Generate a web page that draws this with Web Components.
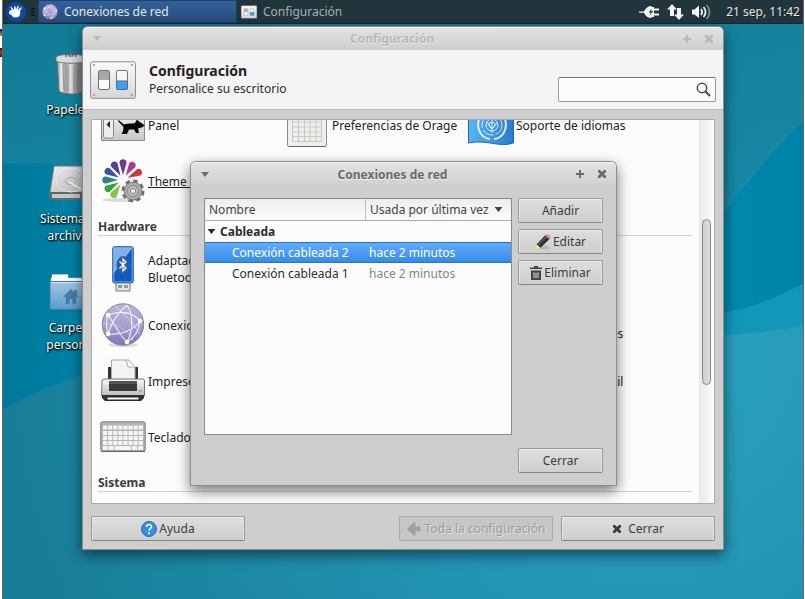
<!DOCTYPE html>
<html lang="es">
<head>
<meta charset="utf-8">
<title>Escritorio</title>
<style>
html,body{height:100%}
body{margin:0;background:linear-gradient(#2b1608,#c98a4a) 0 29px/2px 7px no-repeat,linear-gradient(#3a1408,#a83a18,#3a1408) 0 48px/2px 9px no-repeat,#fff;font:12px/17px "Noto Sans","Open Sans",sans-serif;color:#2d2d2d;overflow:hidden}
</style>
</head>
<body>
<xf-desktop></xf-desktop>
<script>
const ICONS = {
mouse:`<svg viewBox="0 0 20 20"><circle cx="10" cy="10" r="10" fill="#0a4aa8"/><path d="M3 11C3 9 4 8 6 8L4.500 5.500C4.500 4.800 5.300 4.600 5.800 5.200L8 8L8.200 4.500C8.500 3.700 9.300 3.800 9.500 4.500L10 7.500L11.500 4C12.200 3.500 12.800 4 12.600 4.700L12 8L14.800 5.300C15.600 5.100 16 5.700 15.600 6.400L14 9C15 12 13.500 15.500 10 15.500C7 15.600 5.500 14 5.200 12.600C4 12.500 3 12 3 11Z" fill="#fff"/></svg>`,
globe:`<svg viewBox="0 0 44 44"><defs><linearGradient id="g" x2="0" y2="1"><stop stop-color="#b9b4d4"/><stop offset=".5" stop-color="#a9a0d2"/><stop offset="1" stop-color="#8174bd"/></linearGradient></defs><ellipse cx="22" cy="42" rx="15" ry="2" fill="#0002"/><circle cx="22" cy="21.500" r="20.700" fill="url(#g)" stroke="#84819a"/><g fill="none" stroke="#fff" stroke-opacity=".75" stroke-width="1.300"><path d="M7 12C19 7 32 9 39 18M7 12C18 28 20 34 26 39M7 31C22 32 34 26 39 18M7 31C11 17 19 8 26 2M26 39C33 26 32 11 26 2M7 12C5 18 5 24 7 31M26 39C33 35 38 28 39 18"/><path d="M14 3C27 14 36 26 39 31M2 21C16 20 30 29 32 38" opacity=".4"/></g><g fill="#fff"><circle cx="7" cy="12" r="2.300"/><circle cx="7" cy="31" r="2.300"/><circle cx="39" cy="18" r="2.300"/><circle cx="26" cy="39" r="2.300"/></g></svg>`,
switches:`<svg viewBox="0 0 46 38"><defs><linearGradient id="s" x2="0" y2="1"><stop stop-color="#fafafa"/><stop offset="1" stop-color="#d6d6d6"/></linearGradient></defs><rect x=".5" y=".8" width="45" height="36.500" rx="2" fill="url(#s)" stroke="#8d8d8d"/><g fill="#aaa"><circle cx="4" cy="4" r="1.300"/><circle cx="42" cy="4" r="1.300"/><circle cx="4" cy="34" r="1.300"/><circle cx="42" cy="34" r="1.300"/></g><rect x="8.500" y="9.500" width="11" height="19" rx="1.500" fill="#fafafa" stroke="#707070"/><path d="M9 10H19V19H9Z" fill="#a8a8a8"/><rect x="26.500" y="9.500" width="11" height="19" rx="1.500" fill="#f6f6f6" stroke="#777"/><path d="M26.500 20H37.500V27Q37.500 28.500 36 28.500H28Q26.500 28.500 26.500 27Z" fill="#4a9bea" stroke="#2f74bd"/></svg>`,
plug:`<svg viewBox="0 0 20 14"><path d="M0 6.500H5C6.500 3 9 1 12.500 1V2H15V3.500H20V5.500H15V8.500H20V10.500H15V12H12.500V13C9 13 6.500 11 5 7.700H0Z" fill="#f4f4f4"/><path d="M13 3.500L9.500 7.500H12L10 11L14.500 6.300H12Z" fill="#22343c"/></svg>`,
updown:`<svg viewBox="0 0 17 16"><path d="M5 0L10 5.500H7V12H3V5.500H0ZM12 16L7 10.500H10V4H14V10.500H17Z" fill="#f4f4f4"/></svg>`,
sound:`<svg viewBox="0 0 19 16"><path d="M0 5.500H2.500L7 1.500V14L2.500 10.500H0Z" fill="#f4f4f4"/><g fill="none" stroke-width="1.700"><path d="M9 5C10.500 7 10.500 9 9 11M11.500 3C14 6 14 10 11.500 13" stroke="#f4f4f4"/><path d="M14.500 1C18.500 5 18.500 11 14.500 15" stroke="#7b888e"/></g></svg>`,
trash:`<svg viewBox="0 0 32 44"><defs><linearGradient id="t"><stop stop-color="#8c8c8c"/><stop offset=".15" stop-color="#ededed"/><stop offset=".3" stop-color="#9a9a9a"/><stop offset=".5" stop-color="#e6e6e6"/><stop offset=".7" stop-color="#8f8f8f"/><stop offset="1" stop-color="#777"/></linearGradient></defs><path d="M2 8H30L28 39C24 43 8 43 4 39Z" fill="url(#t)" stroke="#6c6c6c"/><path d="M8 12L9 38M13 13V40M19 13V40M24 12L23 38" stroke="#777" stroke-opacity=".6"/><path d="M1 6C1 1 31 1 31 6V9C27 12 5 12 1 9Z" fill="#dadada" stroke="#777"/><path d="M11 5V2H14V4H18V2H21V5" fill="none" stroke="#555" stroke-width="1.200"/></svg>`,
disk:`<svg viewBox="0 0 44 36"><defs><linearGradient id="d" x2="1" y2="1"><stop stop-color="#efefef"/><stop offset="1" stop-color="#a6a6a6"/></linearGradient></defs><path d="M5 1H39L43 27V34H1V27Z" fill="url(#d)" stroke="#777"/><path d="M1 27H43V34H1Z" fill="#666"/><path d="M3 29H31V33H3Z" fill="#c8c8c8"/><ellipse cx="22" cy="15" rx="15" ry="12" fill="none" stroke="#e8e8e8"/><ellipse cx="22" cy="16" rx="6" ry="3.500" fill="#ccc" stroke="#aaa"/><path d="M32 24L20 17" stroke="#eee" stroke-width="2"/></svg>`,
folder:`<svg viewBox="0 0 44 36"><defs><linearGradient id="f" x2="0" y2="1"><stop stop-color="#a5c6e2"/><stop offset="1" stop-color="#5a9bcf"/></linearGradient></defs><path d="M2 8V4H3V.5H19V4H42V8Z" fill="#fff" stroke="#ccc" stroke-width=".5"/><path d="M1 7.500H43V35.500H1Z" fill="url(#f)" stroke="#3c78a8"/><path d="M2 8.500H42" stroke="#d5e7f5"/><path d="M14 23L22 15L25 18V16H28V21L30 23H27V30H23.500V25H20.500V30H17V23Z" fill="#457ba7"/></svg>`,
rat:`<svg viewBox="0 0 44 36"><defs><linearGradient id="r" x2="0" y2="1"><stop stop-color="#fafafa"/><stop offset="1" stop-color="#c7c7c7"/></linearGradient></defs><path d="M.5 0H43.500V33.500H.5Z" fill="url(#r)" stroke="#8b8b8b"/><rect x="2.500" y="7" width="10" height="24" rx="1.500" fill="#eee" stroke="#888"/><path d="M9 14V21L5.500 17.500Z" fill="#222"/><path d="M17.500 13L23 17.500C28 15.500 32 17 34 16L36 12.500L38 14.500L43.500 18L42 20L37 21.500L38 26H35L33 22.500H28L26 27H20.500L22 24L22.500 20L17 14Z" fill="#050505"/></svg>`,
calendar:`<svg viewBox="0 -6 40 46"><path d="M.5 0H39.500V37Q39.500 38.500 38 38.500H2Q.5 38.500 .5 37Z" fill="#eee" stroke="#8b8b8b"/><path d="M5.500 9V33.500H34.500V9M5.500 14H34.500M5.500 19H34.500M5.500 24H34.500M5.500 28.500H34.500M11.500 9V33M17.500 9V33M23 9V33M29 9V33" fill="none" stroke="#cbc9be"/><path d="M2 38.500H38" stroke="#666"/></svg>`,
flag:`<svg viewBox="0 -4 46 44"><defs><linearGradient id="l"><stop stop-color="#57b5ee"/><stop offset="1" stop-color="#2b78d3"/></linearGradient></defs><path d="M.5 0H45.500V36C31 41 19 32 .5 36Z" fill="url(#l)" stroke="#2269b4"/><g fill="none" stroke="#d9efff"><circle cx="24" cy="18" r="3"/><circle cx="24" cy="18" r="6"/><circle cx="24" cy="18" r="10" stroke-dasharray="12 2"/><path d="M11 12C8 22 13 31 22 32M37 12C40 22 35 31 26 32" stroke-width="2"/><path d="M19 15L24 22L30 15M24 8V26" /></g></svg>`,
theme:`<svg viewBox="0 0 44 44"><ellipse cx="20" cy="41" rx="19" ry="2" fill="#0002"/><g transform="translate(22 21)"><path d="M0 -5L-3.500 -17C-4 -22 4 -22 3.500 -17Z" fill="#6c3a8f"/><path d="M0 -5L-3.500 -17C-4 -22 4 -22 3.500 -17Z" fill="#a83c8f" transform="rotate(32)"/><path d="M0 -5L-3.500 -17C-4 -22 4 -22 3.500 -17Z" fill="#c93a3e" transform="rotate(64)"/><path d="M0 -5L-3.500 -17C-4 -22 4 -22 3.500 -17Z" fill="#53408f" transform="rotate(-30)"/><path d="M0 -5L-3.500 -17C-4 -22 4 -22 3.500 -17Z" fill="#3457a4" transform="rotate(-60)"/><path d="M0 -5L-3.500 -17C-4 -22 4 -22 3.500 -17Z" fill="#328086" transform="rotate(-90)"/><path d="M0 -5L-3.500 -17C-4 -22 4 -22 3.500 -17Z" fill="#30a541" transform="rotate(-120)"/><path d="M0 -5L-3.500 -17C-4 -22 4 -22 3.500 -17Z" fill="#8bc34a" transform="rotate(-148)"/></g><circle cx="32" cy="32" r="9.500" fill="none" stroke="#707070" stroke-width="4" stroke-dasharray="4.200 3.260"/><circle cx="32" cy="32" r="9" fill="#aaa" stroke="#777"/><circle cx="32" cy="32" r="5.500" fill="#bbb" stroke="#888"/><circle cx="32" cy="32" r="2.500" fill="#fff" stroke="#777"/></svg>`,
usb:`<svg viewBox="0 0 22 46"><path d="M4 34H18V45H4Z" fill="#e4e4df" stroke="#777"/><path d="M6 39H10V42H6ZM12 39H16V42H12Z" fill="#999"/><rect x=".8" y=".8" width="20.400" height="36" rx="1.500" fill="#0f5cc0" stroke="#114f9c"/><path d="M1.500 1.500H20.500L1.500 28Z" fill="#7fb0e8"/><rect x="1.800" y="1.800" width="18.400" height="34" fill="none" stroke="#9cc5f3" stroke-opacity=".7"/><ellipse cx="11" cy="19" rx="6.500" ry="9" fill="#2d5d9c"/><path d="M7.500 15.500L14 22L11 25V13L14 16L7.500 22.500" fill="none" stroke="#fff" stroke-width="1.200"/></svg>`,
printer:`<svg viewBox="0 0 44 44"><defs><linearGradient id="q" x2="0" y2="1"><stop stop-color="#f7f7f7"/><stop offset="1" stop-color="#bdbdbd"/></linearGradient></defs><path d="M7 8H37V25H7Z" fill="#333"/><path d="M10.500 22V1H28L34 8V22Z" fill="#f3f3f3" stroke="#aaa"/><path d="M25 1L27 8L34 8" fill="#fff" stroke="#aaa"/><path d="M1 22Q1 20 3 20H42Q43.500 20 43.500 22V37H.5Z" fill="url(#q)" stroke="#777"/><path d="M8 22H36V32H8Z" fill="#3a3a3a"/><path d="M8 22H36V25H8Z" fill="#555"/><path d="M1 36H43V39L40 42H4L1 39Z" fill="#333"/><path d="M6 38H38V41H6Z" fill="#fff" stroke="#222"/><circle cx="39.500" cy="32" r="1.500" fill="#7ed34c"/></svg>`,
keyboard:`<svg viewBox="0 0 46 32"><rect x=".8" y=".8" width="44.400" height="29.400" rx="1.500" fill="#b5b5b5" stroke="#7b7b7b"/><path d="M1 30.500H45" stroke="#666"/><g stroke="#f4f4f4" stroke-width="4"><path d="M3 6.500H43M3 12H43M3 17H43M3 22H43" stroke-dasharray="4.200 .9"/><path d="M3 27H7.500M8.500 27H13.500M14.500 27H31M32 27H37M38 27H43"/></g></svg>`,
help:`<svg viewBox="0 0 16 16"><circle cx="8" cy="8" r="7.500" fill="#3391e3" stroke="#2569ac"/><path d="M5.500 6C5.500 2.500 10.500 2.700 10.500 5.700C10.500 7.500 8 7.700 8 9.700" fill="none" stroke="#fff" stroke-width="1.500"/><circle cx="8" cy="12.300" r="1" fill="#fff"/></svg>`,
back:`<svg viewBox="0 0 14 14"><path d="M0 7L6.500 .5H8.500V4.700H13.500V9.300H8.500V13.500H6.500Z" fill="#a0a0a0"/></svg>`,
cross:`<svg viewBox="0 0 10 10"><path d="M1 1H3L5 3L7 1H9V3L7 5L9 7V9H7L5 7L3 9H1V7L3 5L1 3Z" fill="currentColor"/></svg>`,
close:`<svg viewBox="0 0 8 8"><path d="M0 0H2L4 2L6 0H8V2L6 4L8 6V8H6L4 6L2 8H0V6L2 4L0 2Z" fill="currentColor"/></svg>`,
pencil:`<svg viewBox="0 0 16 16"><path d="M3 15H15L12 11Z" fill="#0002"/><path d="M1.500 10.500L10 1.500L14.500 5L5.500 14Z" fill="#333"/><path d="M3 11.500L11.500 2.500" stroke="#777"/><path d="M1.500 10.500L.3 15.500L5.500 14Z" fill="#ece293"/><path d="M10 1.500C12-.5 17 2 14.500 5Z" fill="#e394d5" stroke="#9b4f90" stroke-width=".5"/></svg>`,
bin:`<svg viewBox="0 0 12 14"><path d="M0 3V1.500H4V0H8V1.500H12V3ZM1 4.500H11V14H1Z" fill="#454545"/><path d="M4 6.500V12M6 6.500V12M8 6.500V12" stroke="#ddd"/></svg>`,
search:`<svg viewBox="0 0 15 15"><circle cx="6" cy="6" r="4.700" fill="none" stroke="#505050" stroke-width="1.500"/><path d="M9 9L14 14" stroke="#505050" stroke-width="2.300"/></svg>`,
down:`<svg viewBox="0 0 8 5"><path d="M0 0H8L4 5Z" fill="currentColor"/></svg>`,
plus:`<svg viewBox="0 0 8 8"><path d="M3 0H5V3H8V5H5V8H3V5H0V3H3Z" fill="currentColor"/></svg>`,
wall:`<svg viewBox="0 0 800 575" preserveAspectRatio="none"><defs><linearGradient id="w1" x2=".3" y2="1"><stop stop-color="#117b97"/><stop offset="1" stop-color="#1c93b2"/></linearGradient><linearGradient id="w2"><stop stop-color="#00789b"/><stop offset=".1" stop-color="#0082a5"/><stop offset=".85" stop-color="#008cb1"/><stop offset="1" stop-color="#0082a7"/></linearGradient><radialGradient id="w3" gradientUnits="userSpaceOnUse" cx="640" cy="320" r="640"><stop stop-color="#2ba4c2"/><stop offset=".4" stop-color="#2396b5"/><stop offset="1" stop-color="#187d98"/></radialGradient></defs><rect width="800" height="575" fill="url(#w1)"/><path d="M0 140C100 136 400 160 640 300C690 230 750 145 800 97V575H0Z" fill="url(#w2)"/><path d="M600 290H700C735 290 770 275 800 260V400H600Z" fill="#1297b8"/><path d="M0 385C180 290 400 300 690 312C730 312 770 308 800 301V575H0Z" fill="url(#w3)"/></svg>`
};
const define = (name, html, setup) => {
  const t = document.createElement('template');
  t.innerHTML = html;
  customElements.define(name, class extends HTMLElement {
    constructor(){ super(); this.attachShadow({mode:'open'}).append(t.content.cloneNode(true)); }
    connectedCallback(){ if (setup) setup(this, this.shadowRoot); }
  });
};

define('xf-icon', `<style>:host{display:block;flex:none}span{display:block;width:100%;height:100%}svg{display:block;width:100%;height:100%}</style><span></span>`,
  (el, r) => { r.querySelector('span').innerHTML = ICONS[el.getAttribute('name')]; });

define('xf-button', `<style>
:host{display:flex;height:25px}
button{flex:1;display:flex;align-items:center;justify-content:center;gap:2px;box-sizing:border-box;margin:0;padding:0 4px;font:inherit;color:#3c3c3c;white-space:nowrap;border:1px solid #999;border-bottom-color:#858585;border-radius:2px;background:linear-gradient(#dedede,#cecece);box-shadow:inset 0 1px #eee,inset 1px 0 #e6e6e6,inset -1px 0 #e6e6e6}
:host([wide]) button{gap:6px}
button:disabled{gap:4px;color:#9b9b9b;text-shadow:1px 1px #e4e4e4;background:#c6c6c6;border-color:#a9a9a9;box-shadow:none}
</style><button type="button"><slot name="icon"></slot><slot></slot></button>`,
  (el, r) => { r.querySelector('button').disabled = el.hasAttribute('disabled'); });

define('xf-window', `<style>
:host{display:flex;flex-direction:column;box-sizing:border-box;background:#cecece;border:1px solid #8c8c8c;border-top-color:#888;border-radius:6px 6px 0 0;box-shadow:0 5px 14px #0008;color:#6a6a6a}
header{display:flex;align-items:center;height:23px;padding:0 10px;gap:14px;background:linear-gradient(#e3e3e3,#cecece);border-radius:5px 5px 0 0;box-shadow:inset 0 1px #f4f4f4}
:host([inactive]) header{color:#b9b9b9}
:host(:not([inactive])) header{height:24px;padding-bottom:2px}
h1{flex:1;margin:0;text-align:center;font:bold 12px/17px "Noto Sans","Open Sans",sans-serif;text-shadow:0 1px #f0f0f0}
header button{border:0;padding:0;margin:0;background:none;color:inherit;width:8px}
main{flex:1;min-height:0;display:flex;flex-direction:column;color:#2d2d2d}
.w{width:8px;height:8px}.d{width:8px;height:5px}
</style><header><button type="button" aria-label="Menú"><xf-icon class="d" name="down"></xf-icon></button><h1></h1><button type="button" aria-label="Maximizar"><xf-icon class="w" name="plus"></xf-icon></button><button type="button" aria-label="Cerrar ventana"><xf-icon class="w" name="close"></xf-icon></button></header><main><slot></slot></main>`,
  (el, r) => { r.querySelector('h1').textContent = el.getAttribute('caption'); });

define('xf-task', `<style>
:host{display:flex}
button{flex:1;display:flex;align-items:center;gap:6px;padding:0 3px;margin:0;border:1px solid transparent;background:none;color:#a9b0b2;font:inherit;white-space:nowrap}
:host([active]) button{color:#e2e6ea;background:linear-gradient(#31629c,#284b77);border-color:#20406a}
</style><button type="button"><slot name="icon"></slot><slot></slot></button>`);

define('xf-panel', `<style>
:host{display:flex;height:23px;align-items:stretch;background:#22343c;border-bottom:1px solid #16262d;color:#e4e7e8;text-shadow:1px 1px #0006}
.menu{border:0;background:none;padding:0 0 0 3px;margin:0;display:flex;align-items:center}
.grip{width:4px;height:9px;margin:8px 3px 0 5px;background:repeating-linear-gradient(#0f1c22 0 2px,transparent 2px 3px)}
.tray{margin-left:auto;display:flex;align-items:center;padding-right:3px;gap:8px;white-space:nowrap}
xf-task[active]{width:199px}
.m{width:20px;height:20px}.i{width:16px;height:16px}.p{width:20px;height:14px}.u{width:17px;height:16px}.s{width:19px;height:16px}
time{margin-left:7px}
</style>
<button class="menu" type="button" aria-label="Menú de aplicaciones"><xf-icon class="m" name="mouse"></xf-icon></button><span class="grip"></span>
<xf-task active><xf-icon class="i" slot="icon" name="globe"></xf-icon>Conexiones de red</xf-task>
<xf-task><xf-icon class="i" slot="icon" name="switches"></xf-icon>Configuración</xf-task>
<div class="tray"><xf-icon class="p" name="plug"></xf-icon><xf-icon class="u" name="updown"></xf-icon><xf-icon class="s" name="sound"></xf-icon><time>21 sep, 11:42</time></div>`);

define('xf-launcher', `<style>
:host{display:flex;flex-direction:column;align-items:center;width:88px;height:109px;text-align:center;color:#fff;text-shadow:1px 1px 2px #000,0 1px 2px #000}
.pic{height:50px;display:flex;align-items:center}
p{margin:2px 0 0}
</style><div class="pic"><slot name="icon"></slot></div><p><slot></slot></p>`);

define('xf-setting', `<style>
:host{display:flex;height:56px;align-items:center;color:#222}
.pic{width:48px;height:48px;flex:none;display:flex;align-items:center;justify-content:center;margin-right:1px}
:host([hover]) a{text-decoration:underline}
a{color:inherit;text-decoration:none;white-space:nowrap}
</style><div class="pic"><slot name="icon"></slot></div><a href="#"><slot></slot></a>`);

define('xf-connections', `<style>
:host{display:block;background:#fcfcfc;border:1px solid #8a8a8a;box-sizing:border-box;overflow:hidden}
table{width:100%;border-collapse:separate;border-spacing:0;table-layout:fixed}
th,td{height:21px;box-sizing:border-box;padding:0 4px;text-align:left;font-weight:normal;white-space:nowrap}
thead th{height:22px;color:#444;background:linear-gradient(#ededed,#fcfcfc);border-bottom:1px solid #aaa}
thead th:first-child{width:161px;border-right:1px solid #bbb}
thead div{display:flex;align-items:center;gap:5px}
tbody th{font-weight:bold;padding-left:2px}
tbody th div{display:flex;align-items:center;gap:4px}
td:first-child{padding-left:27px}td:last-child{color:#7e858d;padding-left:3px}
.sel td,.sel td:last-child{color:#fff;background:linear-gradient(#60abff,#388ce6);border-top:1px solid #2c72c2;border-bottom:1px solid #2c72c2}
.t{width:9px;height:5px}
</style><table><thead><tr><th scope="col">Nombre</th><th scope="col"><div>Usada por última vez<xf-icon class="t" name="down"></xf-icon></div></th></tr></thead>
<tbody><tr><th colspan="2" scope="rowgroup"><div><xf-icon class="t" name="down"></xf-icon>Cableada</div></th></tr>
<tr class="sel"><td>Conexión cableada 2</td><td>hace 2 minutos</td></tr>
<tr><td>Conexión cableada 1</td><td>hace 2 minutos</td></tr></tbody></table>`);

define('xf-network', `<style>
:host{display:flex;flex:1;flex-direction:column;padding:10px 13px 12px;min-height:0}
.row{display:flex;gap:6px;flex:1;min-height:0}
xf-connections{flex:1}
.side{width:85px;display:flex;flex-direction:column;gap:6px}
.end{display:flex;justify-content:flex-end;margin-top:13px}
.end xf-button{width:85px}
.e{width:16px;height:16px}.b{width:12px;height:14px}
</style><div class="row"><xf-connections></xf-connections><div class="side"><xf-button>Añadir</xf-button><xf-button><xf-icon slot="icon" class="e" name="pencil"></xf-icon>Editar</xf-button><xf-button><xf-icon slot="icon" class="b" name="bin"></xf-icon>Eliminar</xf-button></div></div><div class="end"><xf-button>Cerrar</xf-button></div>`);

define('xf-settings', `<style>
:host{display:flex;flex:1;flex-direction:column;min-height:0}
.head{display:flex;align-items:center;height:59px;padding:0 7px;background:#f4f4f4;border-bottom:1px solid #bbb}
.ico{width:46px;height:38px;margin:0 13px 0 0}
h2{margin:0;font-size:14px;line-height:18px;color:#222}
.head p{margin:0}
.search{margin:19px 0 0 auto;width:158px;height:25px;box-sizing:border-box;display:flex;align-items:center;background:#fcfcfc;border:1px solid #999;border-top-color:#777;border-radius:2px;padding-right:4px}
input{flex:1;min-width:0;border:0;background:none;outline:0;font:inherit;padding:0 5px}
.z{width:15px;height:15px}
.list{flex:1;min-height:0;display:flex;margin:9px 8px 12px;border:1px solid #aaa;background:#fcfcfc;overflow:hidden}
.view{flex:1;min-width:0;padding:0 6px;overflow:hidden}
.scrolled{margin-top:-23px}
.grid{display:grid;grid-template-columns:repeat(3,184px);padding-left:1px}
h3{margin:0 0 5px;height:27px;padding-top:9px;box-sizing:border-box;font-size:12px;line-height:17px;color:#3c3c3c;border-bottom:1px solid #d0d0d0}
.bar{width:15px;box-sizing:border-box;background:linear-gradient(90deg,#e9e9e9,#fcfcfc);display:flex;justify-content:center;padding-top:99px}
.thumb{width:9px;height:166px;box-sizing:border-box;border:1px solid #888;border-radius:5px;background:linear-gradient(90deg,#cecece,#dedede)}
.foot{display:flex;gap:8px;padding:0 8px 8px}
.foot xf-button{width:154px}.foot .sp{flex:1}
.k{width:46px;height:32px}.q{width:44px;height:44px}.c{width:40px;height:46px}.f{width:46px;height:44px}.r{width:44px;height:36px}.us{width:22px;height:46px}
.h{width:16px;height:16px}.a{width:14px;height:14px}.x{width:10px;height:10px}
</style>
<div class="head"><xf-icon class="ico" name="switches"></xf-icon><div><h2>Configuración</h2><p>Personalice su escritorio</p></div><div class="search"><input type="search" aria-label="Buscar"><xf-icon class="z" name="search"></xf-icon></div></div>
<div class="list"><div class="view"><div class="scrolled">
<div class="grid">
<xf-setting><xf-icon slot="icon" class="r" name="rat"></xf-icon>Panel</xf-setting>
<xf-setting><xf-icon slot="icon" class="c" name="calendar"></xf-icon>Preferencias de Orage</xf-setting>
<xf-setting><xf-icon slot="icon" class="f" name="flag"></xf-icon>Soporte de idiomas</xf-setting>
<xf-setting hover><xf-icon slot="icon" class="q" name="theme"></xf-icon>Theme Config</xf-setting>
</div>
<h3>Hardware</h3>
<div class="grid">
<xf-setting><xf-icon slot="icon" class="us" name="usb"></xf-icon>Adaptadores<br>Bluetooth</xf-setting><i></i><i></i>
<xf-setting><xf-icon slot="icon" class="q" name="globe"></xf-icon>Conexiones</xf-setting><i></i><xf-setting>Unidades y<br>soportes extraíbles</xf-setting>
<xf-setting><xf-icon slot="icon" class="q" name="printer"></xf-icon>Impresoras</xf-setting><i></i><xf-setting>Ratón y panel táctil</xf-setting>
<xf-setting><xf-icon slot="icon" class="k" name="keyboard"></xf-icon>Teclado</xf-setting>
</div>
<h3>Sistema</h3>
</div></div><div class="bar"><div class="thumb"></div></div></div>
<div class="foot"><xf-button><xf-icon slot="icon" class="h" name="help"></xf-icon>Ayuda</xf-button><span class="sp"></span><xf-button disabled><xf-icon slot="icon" class="a" name="back"></xf-icon>Toda la configuración</xf-button><xf-button wide><xf-icon slot="icon" class="x" name="cross"></xf-icon>Cerrar</xf-button></div>`);

define('xf-desktop', `<style>
:host{display:flex;flex-direction:column;height:100vh;margin:0 1px 0 2px;border:solid #65686a;border-width:0 1px;box-sizing:border-box}
.area{flex:1;position:relative;display:flex;min-height:0}
.wall{position:absolute;inset:0}
.icons{position:relative;padding:25px 0 0 24px}
.settings{position:absolute;inset:2px 79px 49px 79px}
.network{position:absolute;inset:137px 186px 113px 187px}
.t{width:32px;height:44px}.d{width:44px;height:36px}
</style>
<xf-panel></xf-panel>
<div class="area"><xf-icon class="wall" name="wall"></xf-icon>
<div class="icons"><xf-launcher><xf-icon slot="icon" class="t" name="trash"></xf-icon>Papelera</xf-launcher><xf-launcher><xf-icon slot="icon" class="d" name="disk"></xf-icon>Sistema de<br>archivos</xf-launcher><xf-launcher><xf-icon slot="icon" class="d" name="folder"></xf-icon>Carpeta<br>personal</xf-launcher></div>
<xf-window class="settings" caption="Configuración" inactive><xf-settings></xf-settings></xf-window>
<xf-window class="network" caption="Conexiones de red"><xf-network></xf-network></xf-window>
</div>`);
</script>
</body>
</html>
